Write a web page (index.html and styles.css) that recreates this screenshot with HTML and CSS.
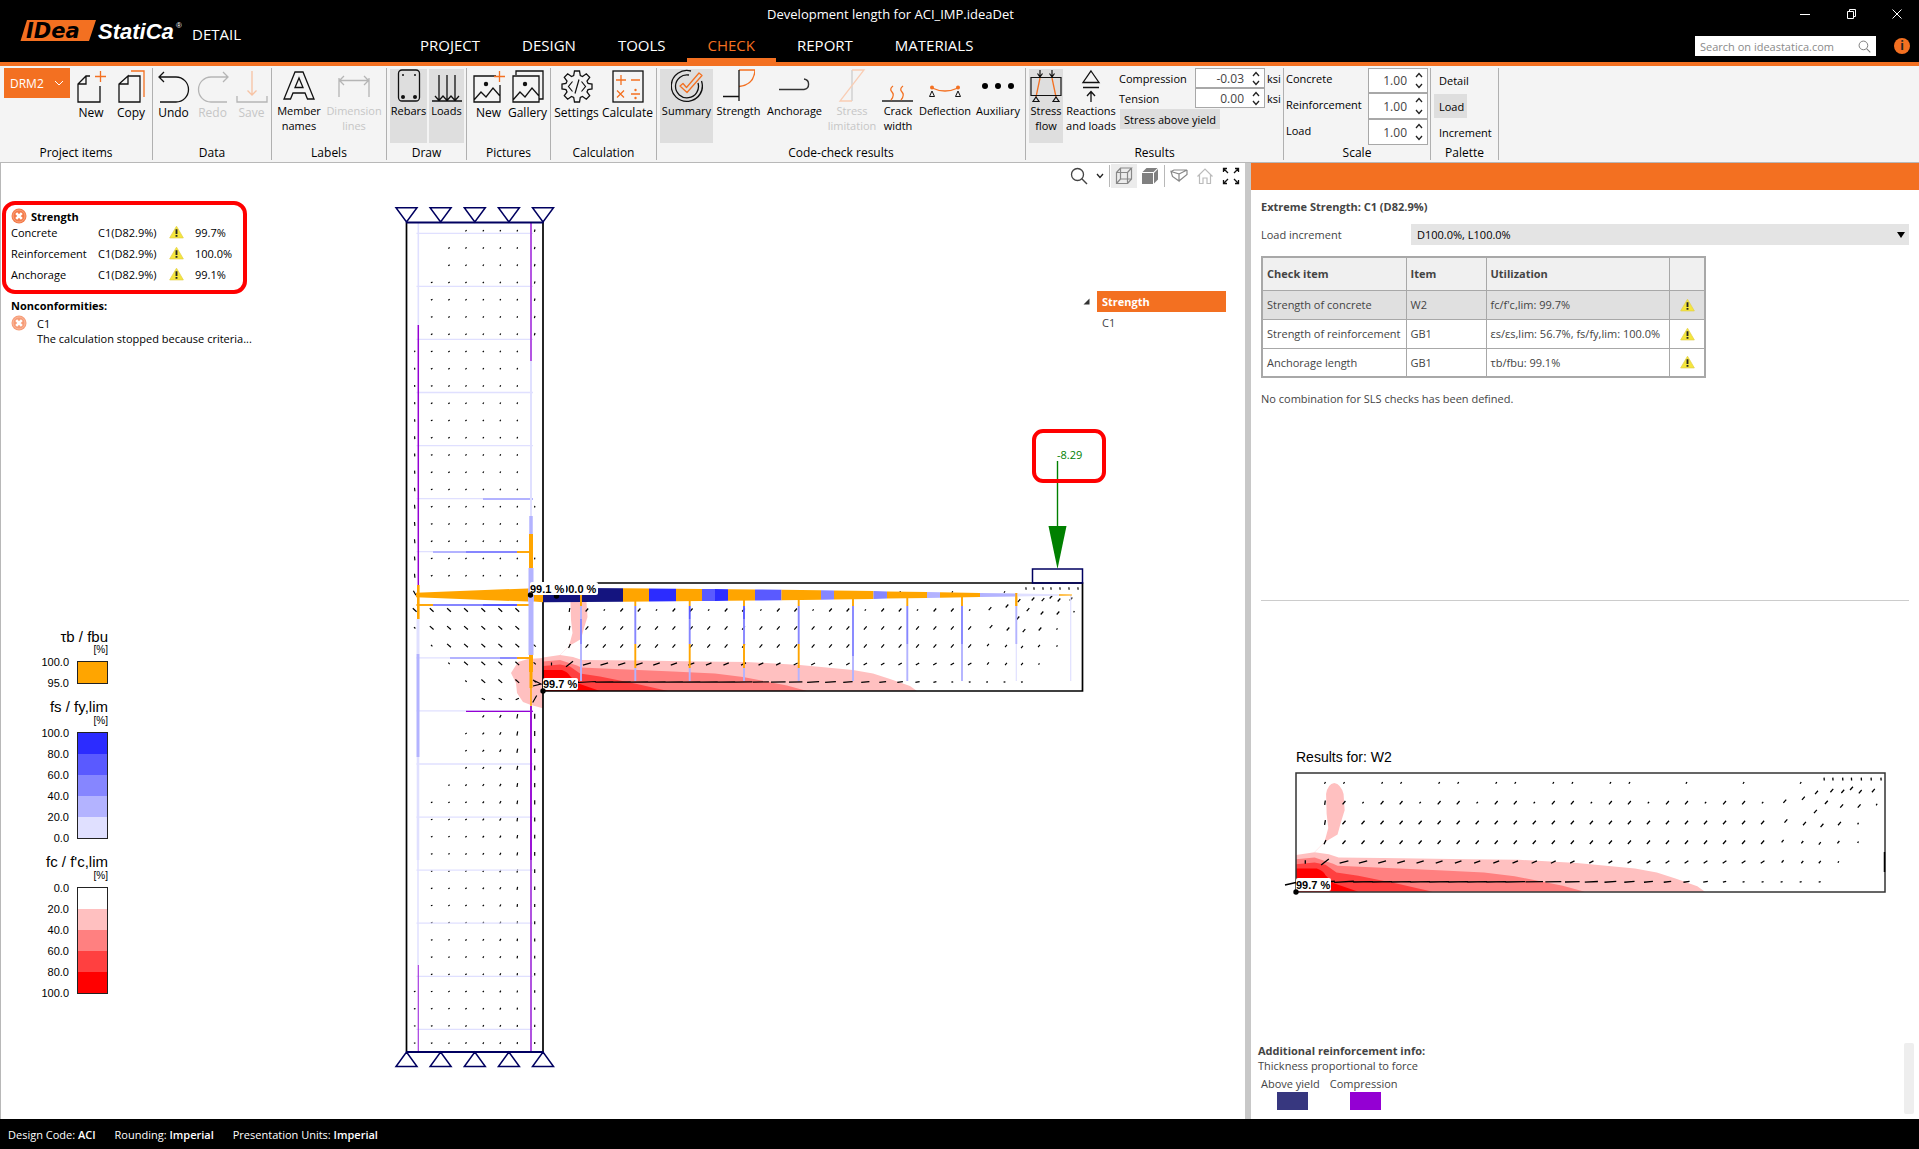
FILE: index.html
```html
<!DOCTYPE html>
<html lang="en">
<head>
  <meta charset="UTF-8">
  <meta name="viewport" content="width=device-width, initial-scale=1.0">
  <title>Development length for ACI_IMP.ideaDet</title>
  <link rel="stylesheet" href="styles.css">
</head>
<body>
  <!-- Shared symbols -->
  <svg class="sprite" aria-hidden="true">
    <symbol id="up" viewBox="0 0 8 6"><path d="M1 5L4 1.5L7 5" fill="none" stroke="#222" stroke-width="1.3"/></symbol>
    <symbol id="down" viewBox="0 0 8 6"><path d="M1 1L4 4.500L7 1" fill="none" stroke="#222" stroke-width="1.3"/></symbol>
    <symbol id="warn" viewBox="0 0 16 14">
      <path d="M8 .8L15.300 13.300H.7Z" fill="#f5e63c" stroke="#e3d04a" stroke-width=".8" stroke-linejoin="round"/>
      <path d="M8 4V9M8 10.300V12" stroke="#222" stroke-width="2"/>
    </symbol>
    <symbol id="error" viewBox="0 0 16 16">
      <circle cx="8" cy="8" r="7.500" fill="#f47b4a"/><circle cx="8" cy="8" r="6" fill="none" stroke="#f9a27c"/>
      <path d="M5.200 5.200L10.800 10.800M10.800 5.200L5.200 10.800" stroke="#fff" stroke-width="2.600"/>
    </symbol>
    <symbol id="picture" viewBox="0 0 32 34">
      <path d="M23 7H1V33H27V16M1 31L8 23L13 28L20 19L27 27" fill="none" stroke="#111" stroke-width="1.3"/>
      <circle cx="13" cy="15" r="2.200" fill="#111"/>
    </symbol>
    <symbol id="lens" viewBox="0 0 18 18">
      <circle cx="7.500" cy="7.500" r="6" fill="none" stroke="currentColor" stroke-width="1.3"/><path d="M11.800 11.800L17 17" stroke="currentColor" stroke-width="1.4"/>
    </symbol>
    <defs>
      <!-- Stress field of the beam, in the coordinates of the model view -->
      <g id="beamStress">
        <path fill="#ffc0c0" d="M543 657.500L560 655L573 657L582 660L640 660.500L700 661.500L747 662L800 665L853 670L873 673.500L890 679L910 686L917 691H543Z"/>
        <path fill="#ffc0c0" d="M569 646L572.500 633L571 620L570.500 602Q572 593 578 592Q584 593 586.500 602L587.500 617L584 628L581 639L576 642Z"/>
        <path d="M569 646L560 655" stroke="#ffe4e4" stroke-width=".7"/>
        <path fill="#ff8080" d="M543 661.500L560 660L577 665.500L581 667.500L673 671.500L715 673.500L743 677L787 685.500L807 691H543Z"/>
        <path fill="#ff4040" d="M543 666L560 664.500L570 666.500L580 673.500L600 676.500L637 684L668 691H543Z"/>
        <path fill="#f00" d="M543 670H562Q568 672 570 676L577 683L600 691H543Z"/>
        <path id="beamTicks" fill="none" stroke="#000" stroke-width="1.2"/>
      </g>
    </defs>
  </svg>

  <header class="titlebar">
    <div class="brand">
      <svg class="logo" viewBox="0 0 162 26" width="162" height="26" role="img" aria-label="IDEA StatiCa">
        <path d="M7 2H76L69 23H.5Z" fill="#f37021"/>
        <text class="logo-idea" x="6" y="20">IDea</text>
        <text class="logo-name" x="78" y="21">StatiCa</text>
        <text class="logo-reg" x="156" y="10">®</text>
      </svg>
      <span class="product">DETAIL</span>
    </div>
    <div class="title">Development length for ACI_IMP.ideaDet</div>
    <div class="window-buttons">
      <button aria-label="Minimize"><svg width="12" height="12"><path d="M1 6.500H11" stroke="#fff"/></svg></button>
      <button aria-label="Restore"><svg width="12" height="12" fill="none" stroke="#fff"><path d="M2.500 3.500H8.500V10.500H2.500ZM4.500 3V1.500H10.500V8.500H9"/></svg></button>
      <button aria-label="Close"><svg width="12" height="12"><path d="M1.500 1.500L10.500 10.500M10.500 1.500L1.500 10.500" stroke="#fff"/></svg></button>
    </div>
    <nav class="tabs">
      <a href="#project">PROJECT</a>
      <a href="#design">DESIGN</a>
      <a href="#tools">TOOLS</a>
      <a href="#check" class="active">CHECK</a>
      <a href="#report">REPORT</a>
      <a href="#materials">MATERIALS</a>
    </nav>
    <div class="search">
      <div class="search-box">
        <input type="text" placeholder="Search on ideastatica.com" aria-label="Search on ideastatica.com">
        <svg width="13" height="13"><use href="#lens"/></svg>
      </div>
      <button class="info" aria-label="Info">i</button>
    </div>
  </header>

  <!-- Ribbon -->
  <div class="ribbon">
    <section class="group g-items">
      <div class="tools">
        <button class="project-pick">DRM2 <svg width="10" height="7"><path d="M1 1L5 5L9 1" fill="none" stroke="#fff"/></svg></button>
        <button class="tool low"><svg viewBox="0 0 32 34"><path d="M15 7H11L3 15V33H25V17M3 15H11V7" fill="none" stroke="#111" stroke-width="1.300"/><path d="M20 7.500H31M25.500 2V13" stroke="#f37021" stroke-width="1.300"/></svg><span>New</span></button>
        <button class="tool low"><svg viewBox="0 0 32 34"><path d="M13 7H25V33H4V15L13 7V15H4" fill="none" stroke="#111" stroke-width="1.300"/><path d="M16 2H29V28" fill="none" stroke="#f37021" stroke-width="1.300"/></svg><span>Copy</span></button>
      </div>
      <h2>Project items</h2>
    </section>
    <section class="group g-data">
      <div class="tools">
        <button class="tool low"><svg viewBox="0 0 32 34"><path d="M6 3L1 8L6 13M1 8H18A12.500 12.500 0 0 1 18 33H2" fill="none" stroke="#111" stroke-width="1.300"/></svg><span>Undo</span></button>
        <button class="tool low" disabled><svg viewBox="0 0 32 34"><path d="M26 3L31 8L26 13M31 8H14A12.500 12.500 0 0 0 14 33H30" fill="none" stroke="#b5b5b5" stroke-width="1.300"/></svg><span>Redo</span></button>
        <button class="tool low" disabled><svg viewBox="0 0 32 34"><path d="M1 27V33H31V27" fill="none" stroke="#b5b5b5" stroke-width="1.300"/><path d="M16 2V26M11.500 21.500L16 26L20.500 21.500" fill="none" stroke="#f7c3a4" stroke-width="1.300"/></svg><span>Save</span></button>
      </div>
      <h2>Data</h2>
    </section>
    <section class="group g-labels">
      <div class="tools">
        <button class="tool"><svg viewBox="0 0 32 34"><path d="M12 3H20L31 30H24.500L22 24H10L7.500 30H1ZM16 9L12 18.500H20Z" fill="none" stroke="#111" stroke-width="1.300"/></svg><span>Member<br>names</span></button>
        <button class="tool" disabled><svg viewBox="0 0 32 34"><path d="M1 9V28M31 9V28M1.500 11.500H30.500M6 7L1.500 11.500L6 16M26 7L30.500 11.500L26 16" fill="none" stroke="#b5b5b5" stroke-width="1.300"/></svg><span>Dimension<br>lines</span></button>
      </div>
      <h2>Labels</h2>
    </section>
    <section class="group g-draw">
      <div class="tools">
        <button class="tool on"><svg viewBox="0 0 32 34"><rect x="5.500" y="1" width="21" height="31" rx="3.500" fill="none" stroke="#111" stroke-width="1.300"/><g fill="#111"><circle cx="10" cy="6" r="1"/><circle cx="22" cy="6" r="1"/><circle cx="10" cy="28" r="2"/><circle cx="22" cy="28" r="2"/></g></svg><span>Rebars</span></button>
        <button class="tool on"><svg viewBox="0 0 32 34"><path d="M1 32H31M8 6V31M16 6V31M24 6V31M4 27L8 31.500L12 27L16 31.500L20 27L24 31.500L28 27" fill="none" stroke="#111" stroke-width="1.300"/></svg><span>Loads</span></button>
      </div>
      <h2>Draw</h2>
    </section>
    <section class="group g-pictures">
      <div class="tools">
        <button class="tool low"><svg viewBox="0 0 32 34"><use href="#picture"/><path d="M21 7.500H32M26.500 2V13" stroke="#f37021" stroke-width="1.300"/></svg><span>New</span></button>
        <button class="tool low"><svg viewBox="0 0 32 34"><use href="#picture"/><path d="M23 7H27V16M4 6V2H31V30H27" fill="none" stroke="#111" stroke-width="1.300"/></svg><span>Gallery</span></button>
      </div>
      <h2>Pictures</h2>
    </section>
    <section class="group g-calc">
      <div class="tools">
        <button class="tool low"><svg viewBox="0 0 32 34"><path d="M12.700 6.500L13.500 2H18.500L19.300 6.500L21.500 7.500L25.300 4.800L28.700 8.300L26 12L27 14.300L31 15V20L27 20.700L26 23L28.700 26.700L25.300 30.200L21.500 27.500L19.300 28.500L18.500 33H13.500L12.700 28.500L10.500 27.500L6.700 30.200L3.300 26.700L6 23L5 20.700L1 20V15L5 14.300L6 12L3.300 8.300L6.700 4.800L10.500 7.500Z" fill="none" stroke="#111" stroke-width="1.300"/><path d="M11.500 12.500L7.500 17.500L11.500 22.500M20.500 12.500L24.500 17.500L20.500 22.500M18 10.500L14 24.500" fill="none" stroke="#111" stroke-width="1.200"/></svg><span>Settings</span></button>
        <button class="tool low"><svg viewBox="0 0 32 34"><rect x="1" y="2" width="30" height="31" fill="none" stroke="#111" stroke-width="1.300"/><path d="M4 11H14M9 6V16M19 11H28M5 21.500L12 28.500M12 21.500L5 28.500M19 25H28" stroke="#f37021" stroke-width="1.300"/><circle cx="23.500" cy="21" r="1.200" fill="#f37021"/><circle cx="23.500" cy="29" r="1.200" fill="#f37021"/></svg><span>Calculate</span></button>
      </div>
      <h2>Calculation</h2>
    </section>
    <section class="group g-check">
      <div class="tools">
        <button class="tool on"><svg viewBox="0 0 32 34"><path d="M20 2A15.500 15.500 0 1 0 30.500 12M18 6A11.500 11.500 0 1 0 27 14M31.500 17A15.500 15.500 0 0 1 25 29.500" fill="none" stroke="#111" stroke-width="1.300"/><path d="M9 17L12 14.500L15.500 18.500L28 4L31 6.500L16 23.500Z" fill="none" stroke="#f37021" stroke-width="1.300" stroke-linejoin="round"/></svg><span>Summary</span></button>
        <button class="tool"><svg viewBox="0 0 32 34"><path d="M16 1H32Q31 16 16 17.500" fill="none" stroke="#f37021" stroke-width="1.300"/><path d="M16 1V32M0 27.500H16" stroke="#111" stroke-width="1.300"/></svg><span>Strength</span></button>
        <button class="tool"><svg viewBox="0 0 32 34"><path d="M0 20.500H25A5.300 5.300 0 0 0 25 10" fill="none" stroke="#333" stroke-width="1.400"/></svg><span>Anchorage</span></button>
        <button class="tool" disabled><svg viewBox="0 0 32 34"><path d="M16 1V32" stroke="#ccc" stroke-width="1.300"/><path d="M16 1H28L4 32H16" fill="none" stroke="#f9cdb4" stroke-width="1.300"/></svg><span>Stress<br>limitation</span></button>
        <button class="tool"><svg viewBox="0 0 32 34"><path d="M0 32H31" stroke="#111" stroke-width="1.400"/><path d="M11 17Q7 20 10 23T9 31M21 17Q17 20 20 23T19 31" fill="none" stroke="#f37021" stroke-width="1.300"/></svg><span>Crack<br>width</span></button>
        <button class="tool"><svg viewBox="0 0 32 34"><path d="M3 19Q16 25 29 19" fill="none" stroke="#f37021" stroke-width="1.300"/><circle cx="3" cy="18.500" r="2" fill="#f37021"/><circle cx="29" cy="18.500" r="2" fill="#f37021"/><path d="M3 22L.5 27.500H5.500ZM29 22L26.500 27.500H31.500Z" fill="none" stroke="#111"/></svg><span>Deflection</span></button>
        <button class="tool"><svg viewBox="0 0 32 34"><circle cx="3" cy="17" r="3"/><circle cx="16" cy="17" r="3"/><circle cx="29" cy="17" r="3"/></svg><span>Auxiliary</span></button>
      </div>
      <h2>Code-check results</h2>
    </section>
    <section class="group g-results">
      <div class="tools">
        <button class="tool on"><svg viewBox="0 0 32 34"><path d="M10 9L6 28M22 9L26 28" stroke="#f37021" stroke-width="1.300"/><path d="M1 8.500H31V26.500H1ZM10 1V8M22 1V8M7.500 4.500L10 8L12.500 4.500M19.500 4.500L22 8L24.500 4.500M6 28L3 32.500H9ZM26 28L23 32.500H29Z" fill="none" stroke="#111" stroke-width="1.200"/></svg><span>Stress<br>flow</span></button>
        <button class="tool"><svg viewBox="0 0 32 34"><path d="M16 2L24 13.500H8ZM8 18.500H24M16 33V23M12 27L16 22.500L20 27" fill="none" stroke="#111" stroke-width="1.300"/></svg><span>Reactions<br>and loads</span></button>
        <div class="spins">
          <label for="comp">Compression</label>
          <span class="spin"><input id="comp" type="text" value="-0.03"><span class="steps"><button aria-label="Increase"><svg><use href="#up"/></svg></button><button aria-label="Decrease"><svg><use href="#down"/></svg></button></span></span>
          <span>ksi</span>
          <label for="tens">Tension</label>
          <span class="spin"><input id="tens" type="text" value="0.00"><span class="steps"><button aria-label="Increase"><svg><use href="#up"/></svg></button><button aria-label="Decrease"><svg><use href="#down"/></svg></button></span></span>
          <span>ksi</span>
          <button class="flat on wide">Stress above yield</button>
        </div>
      </div>
      <h2>Results</h2>
    </section>
    <section class="group g-scale">
      <div class="spins">
        <label for="sc">Concrete</label>
        <span class="spin"><input id="sc" type="text" value="1.00"><span class="steps"><button aria-label="Increase"><svg><use href="#up"/></svg></button><button aria-label="Decrease"><svg><use href="#down"/></svg></button></span></span>
        <label for="sr">Reinforcement</label>
        <span class="spin"><input id="sr" type="text" value="1.00"><span class="steps"><button aria-label="Increase"><svg><use href="#up"/></svg></button><button aria-label="Decrease"><svg><use href="#down"/></svg></button></span></span>
        <label for="sl">Load</label>
        <span class="spin"><input id="sl" type="text" value="1.00"><span class="steps"><button aria-label="Increase"><svg><use href="#up"/></svg></button><button aria-label="Decrease"><svg><use href="#down"/></svg></button></span></span>
      </div>
      <h2>Scale</h2>
    </section>
    <section class="group g-palette">
      <div class="palette">
        <button class="flat">Detail</button>
        <button class="flat on">Load</button>
        <button class="flat">Increment</button>
      </div>
      <h2>Palette</h2>
    </section>
  </div>

  <main class="workspace">
    <!-- Model view -->
    <div class="view">
      <svg class="model" viewBox="1 163 1244 956" preserveAspectRatio="xMinYMin meet" role="img" aria-label="Stress flow in the model">
        <path fill="#ffc0c0" d="M543 658L528 659L518 662L511 673L516 683L517 693L523 702L531 705L542 708H543Z"/>
        <use href="#beamStress"/>
        <path id="columnTicks" fill="none" stroke="#000" stroke-width="1.2"/>
        <g id="bars" fill="none"></g>
        <g fill="none" stroke="#000" stroke-width="1.700">
          <path d="M406.500 222V1052M543 222V1052M543 583H1082.500V691H543"/>
        </g>
        <g id="mainBar"></g>
        <g fill="none" stroke="#000060" stroke-width="1.500">
          <path d="M406 222.500H543.500M406 1052H543.500" stroke-width="2"/>
          <path id="supports"/>
          <path d="M1032.500 569H1082.500V583H1032.500Z"/>
        </g>
        <g class="mark">
          <circle cx="556.500" cy="596" r="2.700"/>
          <rect x="553" y="582" width="45" height="13" rx="2"/><text x="556" y="593">100.0 %</text>
          <rect x="530" y="582" width="36" height="13" rx="2"/><text x="530" y="593">99.1 %</text>
          <circle cx="530.500" cy="595" r="2.700"/>
          <rect x="543" y="678" width="35" height="12" rx="2"/><text x="543" y="688">99.7 %</text>
          <circle cx="543" cy="691" r="2.700"/>
        </g>
        <path d="M1057.500 461V528" stroke="#008000" stroke-width="1.400"/>
        <path d="M1048.500 526H1066.500L1057.500 569Z" fill="#008000"/>
        <text class="load" x="1057" y="459">-8.29</text>
        <rect x="1034" y="431" width="70" height="50" rx="9" fill="none" stroke="#f00" stroke-width="4"/>
      </svg>

      <div class="view-tools">
        <button aria-label="Zoom"><svg width="18" height="18"><use href="#lens"/></svg></button>
        <button class="narrow" aria-label="Zoom options"><svg width="8" height="6"><use href="#down"/></svg></button>
        <i></i>
        <button class="on" aria-label="Wireframe"><svg width="18" height="18" fill="none" stroke="#888" stroke-width="1.200"><path d="M1.500 5.500H12.500V16.500H1.500ZM1.500 5.500L5.500 1H16.500L12.500 5.500M16.500 1V12L12.500 16.500M5.500 1V12H16.500M5.500 12L1.500 16.500"/></svg></button>
        <button aria-label="Solid"><svg width="18" height="18" fill="#808080"><path d="M1 6H12V17H1ZM1.500 5L5.500 1H16.500L12.500 5ZM13 6L17 2V12.500L13 16.500Z"/></svg></button>
        <i></i>
        <button aria-label="Perspective"><svg width="18" height="18" fill="none" stroke="#888" stroke-width="1.200"><path d="M1 4.500L9 7V14L2.500 9.500ZM1 4.500L4 3H17L9 7M17 3V7.500L9 14"/></svg></button>
        <button aria-label="Home"><svg width="18" height="18" fill="none" stroke="#bbb" stroke-width="1.200"><path d="M1.500 9.500L9 2L16.500 9.500M3.500 8V16.500H7V11H11V16.500H14.500V8"/></svg></button>
        <button aria-label="Full screen"><svg width="18" height="18" fill="none" stroke="#111" stroke-width="1.300"><path d="M1.500 5V1.500H5M13 1.500H16.500V5M16.500 13V16.500H13M5 16.500H1.500V13M2 2L6 6M16 2L12 6M16 16L12 12M2 16L6 12"/></svg></button>
      </div>

      <div class="summary">
        <div class="strength">
          <h3><svg width="16" height="16"><use href="#error"/></svg>Strength</h3>
          <dl>
            <dt>Concrete</dt><dd>C1(D82.9%)</dd><dd><svg width="15" height="14"><use href="#warn"/></svg></dd><dd>99.7%</dd>
            <dt>Reinforcement</dt><dd>C1(D82.9%)</dd><dd><svg width="15" height="14"><use href="#warn"/></svg></dd><dd>100.0%</dd>
            <dt>Anchorage</dt><dd>C1(D82.9%)</dd><dd><svg width="15" height="14"><use href="#warn"/></svg></dd><dd>99.1%</dd>
          </dl>
        </div>
        <div class="noncon">
          <h3>Nonconformities:</h3>
          <p class="pale"><svg width="16" height="16"><use href="#error"/></svg>C1</p>
          <p class="reason">The calculation stopped because criteria...</p>
        </div>
      </div>

      <div class="legend">
        <h4>τb / fbu</h4><small>[%]</small>
        <div class="scale">
          <ol><li>100.0</li><li>95.0</li></ol>
          <div class="swatches"><b class="bond"></b></div>
        </div>
        <h4>fs / fy,lim</h4><small>[%]</small>
        <div class="scale">
          <ol><li>100.0</li><li>80.0</li><li>60.0</li><li>40.0</li><li>20.0</li><li>0.0</li></ol>
          <div class="swatches"><b class="s5"></b><b class="s4"></b><b class="s3"></b><b class="s2"></b><b class="s1"></b></div>
        </div>
        <h4>fc / f'c,lim</h4><small>[%]</small>
        <div class="scale">
          <ol><li>0.0</li><li>20.0</li><li>40.0</li><li>60.0</li><li>80.0</li><li>100.0</li></ol>
          <div class="swatches"><b class="c1"></b><b class="c2"></b><b class="c3"></b><b class="c4"></b><b class="c5"></b></div>
        </div>
      </div>

      <ul class="tree">
        <li class="picked"><svg width="7" height="7"><path d="M6.500 .5V6.500H.5Z" fill="#333"/></svg><a href="#strength">Strength</a></li>
        <li><a href="#c1">C1</a></li>
      </ul>
    </div>

    <!-- Results panel -->
    <aside class="panel">
      <div class="panel-head"></div>
      <section class="checks">
        <h3>Extreme Strength: C1 (D82.9%)</h3>
        <div class="increment">
          <label for="inc">Load increment</label>
          <div class="select"><select id="inc"><option>D100.0%, L100.0%</option></select></div>
        </div>
        <table>
          <thead><tr><th>Check item</th><th>Item</th><th>Utilization</th><th></th></tr></thead>
          <tbody>
            <tr class="picked"><td>Strength of concrete</td><td>W2</td><td>fc/f'c,lim: 99.7%</td><td><svg width="15" height="14"><use href="#warn"/></svg></td></tr>
            <tr><td>Strength of reinforcement</td><td>GB1</td><td>εs/εs,lim: 56.7%, fs/fy,lim: 100.0%</td><td><svg width="15" height="14"><use href="#warn"/></svg></td></tr>
            <tr><td>Anchorage length</td><td>GB1</td><td>τb/fbu: 99.1%</td><td><svg width="15" height="14"><use href="#warn"/></svg></td></tr>
          </tbody>
        </table>
        <p>No combination for SLS checks has been defined.</p>
      </section>
      <section class="chart">
        <h4>Results for: W2</h4>
        <svg viewBox="0 0 668 136" role="img" aria-label="Results for W2">
          <use href="#beamStress" transform="translate(45 8) scale(1.0935 1.099) translate(-543 -583)"/>
          <rect x="45" y="8" width="589" height="119" fill="none" stroke="#333" stroke-width="1.500"/>
          <path d="M34 120L45 117.500M633.500 87V107" stroke="#000" stroke-width="1.500"/>
          <g class="mark"><rect x="45" y="113" width="35" height="13" rx="2"/><text x="45" y="124">99.7 %</text><circle cx="45" cy="127" r="2.700"/></g>
        </svg>
      </section>
      <section class="reinf">
        <div>
          <h3>Additional reinforcement info:</h3>
          <p>Thickness proportional to force</p>
          <div class="keys"><span>Above yield<b class="yield"></b></span><span>Compression<b class="comp"></b></span></div>
        </div>
        <div class="scrollbar"></div>
      </section>
    </aside>
  </main>

  <footer class="status">
    <span>Design Code: <b>ACI</b></span>
    <span>Rounding: <b>Imperial</b></span>
    <span>Presentation Units: <b>Imperial</b></span>
  </footer>

  <script src="model.js"></script>
</body>
</html>
```
FILE: styles.css
```css
* {
  box-sizing: border-box;
}
body {
  display: flex;
  flex-direction: column;
  min-height: 100vh;
  margin: 0;
  font-family: "Open Sans", sans-serif;
  font-size: 12px;
  line-height: 15px;
  color: #000;
  background: #fff;
}
h2, h3, h4, p, dl, dd, ul, ol {
  margin: 0;
  padding: 0;
  font-size: inherit;
}
ul, ol {
  list-style: none;
}
a {
  color: inherit;
  text-decoration: none;
}
button, input, select {
  margin: 0;
  padding: 0;
  border: 0;
  background: none;
  font: inherit;
  color: inherit;
}
.sprite {
  position: absolute;
  width: 0;
  height: 0;
}

/* Title bar */
.titlebar {
  display: grid;
  grid-template-columns: 399px 1fr 240px;
  grid-template-rows: 28px 34px;
  background: #000;
  color: #fff;
  border-bottom: 4px solid #f37021;
  box-sizing: content-box;
}
.brand {
  grid-row: 1 / 3;
  display: flex;
  align-items: center;
  gap: 10px;
  padding: 6px 0 0 20px;
}
.logo {
  margin-bottom: 6px;
}
.logo-idea {
  font: italic bold 21px "DejaVu Sans", sans-serif;
  fill: #000;
}
.logo-name {
  font: italic bold 22px "Liberation Sans", sans-serif;
  fill: #fff;
}
.logo-reg {
  font: 8px "Liberation Sans", sans-serif;
  fill: #fff;
}
.product {
  font-size: 15px;
}
.title {
  align-self: center;
  padding-right: 297px;
  text-align: center;
  font-size: 13px;
}
.window-buttons {
  display: flex;
  justify-content: flex-end;
  align-items: center;
  gap: 34px;
  padding-right: 16px;
}
.window-buttons button {
  display: flex;
}
.tabs {
  display: flex;
  font-size: 15px;
}
.tabs a {
  padding: 10px 21px 5px;
  border-bottom: 4px solid transparent;
}
.tabs .active {
  color: #f37021;
  border-color: #f37021;
}
.search {
  display: flex;
  justify-content: flex-end;
  align-items: center;
  gap: 18px;
  padding: 2px 9px 0 0;
}
.search-box {
  display: flex;
  align-items: center;
  width: 181px;
  height: 20px;
  padding: 0 5px;
  background: #fff;
  color: #777;
  font-size: 11px;
}
.search-box input {
  flex: 1;
  min-width: 0;
}
.search-box input::placeholder {
  color: #8a8a8a;
}
.info {
  width: 16px;
  height: 16px;
  border-radius: 50%;
  background: #f37021;
  color: #222;
  font-weight: bold;
  line-height: 16px;
}

/* Ribbon */
.ribbon {
  display: flex;
  height: 97px;
  padding: 2px 0;
  background: #f4f4f4;
  border-bottom: 1px solid #b8b8b8;
}
.group {
  display: flex;
  flex-direction: column;
  justify-content: space-between;
  border-right: 1px solid #b0b0b0;
}
.group h2 {
  font-weight: normal;
  text-align: center;
}
.tools {
  display: grid;
}
.g-items { width: 153px; }
.g-items .tools { grid-template-columns: 66px 38px 38px; column-gap: 2px; padding-left: 4px; }
.g-data { width: 119px; }
.g-data .tools { grid-template-columns: 39px 39px 39px; padding-left: 1px; }
.g-labels { width: 115px; }
.g-labels .tools { grid-template-columns: 54px 56px; }
.g-draw { width: 80px; }
.g-draw .tools { grid-template-columns: 37px 35px; column-gap: 2px; padding-left: 3px; }
.g-pictures { width: 84px; }
.g-pictures .tools { grid-template-columns: 39px 39px; padding-left: 2px; }
.g-calc { width: 106px; }
.g-calc .tools { grid-template-columns: 51px 51px; }
.g-check { width: 369px; }
.g-check .tools { grid-template-columns: 53px 51px 61px 54px 38px 56px 50px; padding-left: 3px; }
.g-results { width: 258px; }
.g-results .tools { grid-template-columns: 34px 52px 1fr; column-gap: 2px; padding-left: 3px; }
.g-scale { width: 147px; }
.g-palette { width: 68px; }

.project-pick {
  display: flex;
  align-items: center;
  justify-content: space-between;
  height: 30px;
  padding: 0 6px;
  background: #f37021;
  color: #fff;
}
.tool {
  display: flex;
  flex-direction: column;
  align-items: center;
  height: 74px;
  margin-top: 1px;
}
.tool svg {
  flex: none;
  width: 32px;
  height: 34px;
}
.tool span {
  font-size: 11px;
  white-space: nowrap;
}
.tool.low span {
  margin-top: 2px;
  font-size: 12px;
}
.tool:disabled span {
  color: #c6c6c6;
}
.on {
  background: #dedede;
}
.spins {
  display: grid;
  align-items: center;
}
.g-results .spins {
  grid-template-columns: 76px 70px 17px;
  grid-template-rows: 20px 20px 22px;
  align-content: start;
}
.g-results .spins > span:nth-child(3n) {
  padding-left: 2px;
  font-size: 11px;
}
.g-scale .spins {
  grid-template-columns: 82px 60px;
  grid-template-rows: 25px 26px 26px;
  padding-left: 2px;
}
.g-scale .spins label {
  padding-bottom: 4px;
}
.spins label,
.flat {
  font-size: 11px;
}
.spin {
  display: flex;
  height: 100%;
  background: #fff;
  border: 1px solid #a8a8a8;
}
.spin input {
  flex: 1;
  min-width: 0;
  padding-right: 8px;
  text-align: right;
  color: #444;
}
.steps {
  display: flex;
  flex-direction: column;
  justify-content: space-around;
  width: 12px;
}
.steps button {
  display: flex;
}
.steps svg {
  width: 8px;
  height: 6px;
}
.flat {
  height: 24px;
  padding: 0 3px 0 5px;
  white-space: nowrap;
}
.flat.wide {
  grid-column: 1 / 3;
  justify-self: start;
  height: 20px;
  margin-left: 1px;
  padding: 0;
  width: 100px;
}
.palette {
  display: flex;
  flex-direction: column;
  align-items: flex-start;
  gap: 2px;
  padding-left: 3px;
}

/* Workspace */
.workspace {
  flex: 1;
  display: grid;
  grid-template-columns: 1fr 674px;
  font-size: 11px;
}
.view {
  position: relative;
  overflow: hidden;
  border-left: 1px solid #b8b8b8;
}
.model {
  position: absolute;
  inset: 0;
  width: 100%;
  height: 100%;
}
.mark {
  font: bold 11px "Liberation Sans", sans-serif;
}
.mark rect {
  fill: #fff;
}
.load {
  fill: #008000;
}
.view-tools {
  position: absolute;
  top: 0;
  right: 1px;
  display: flex;
  align-items: center;
  height: 26px;
  color: #444;
}
.view-tools button {
  display: flex;
  align-items: center;
  justify-content: center;
  width: 26px;
  height: 24px;
}
.view-tools .narrow {
  width: 16px;
}
.view-tools .on {
  background: #ececec;
}
.view-tools i {
  width: 1px;
  height: 22px;
  margin: 0 1px;
  background: #b8b8b8;
}
.summary {
  position: absolute;
  top: 38px;
  left: 1px;
  width: 262px;
}
.summary h3 {
  display: flex;
  align-items: center;
  gap: 4px;
}
.strength {
  width: 245px;
  height: 93px;
  padding: 3px 5px;
  border: 4px solid #f00;
  border-radius: 13px;
}
.strength dl {
  display: grid;
  grid-template-columns: 87px 71px 26px 1fr;
  row-gap: 6px;
  padding-top: 1px;
}
.strength dd svg {
  display: block;
}
.noncon {
  padding: 4px 0 0 9px;
}
.noncon p {
  display: flex;
  align-items: center;
  gap: 10px;
}
.noncon .pale {
  margin-top: 2px;
}
.pale svg {
  opacity: .75;
}
.noncon .reason {
  padding-left: 26px;
  white-space: nowrap;
}

/* Colour scales */
.legend {
  position: absolute;
  top: 465px;
  left: 29px;
  width: 78px;
  font-family: "Liberation Sans", sans-serif;
  text-align: right;
}
.legend h4 {
  font-size: 15px;
  font-weight: normal;
  line-height: 17px;
  white-space: nowrap;
}
.legend .scale + h4 {
  line-height: 18px;
}
.legend small {
  display: block;
  font-size: 10px;
  line-height: 10px;
}
.scale {
  display: flex;
  justify-content: flex-end;
  align-items: center;
  gap: 8px;
  margin-bottom: 8px;
}
.scale ol {
  display: flex;
  flex-direction: column;
  gap: 7px;
}
.scale li {
  line-height: 14px;
}
.swatches {
  display: flex;
  flex-direction: column;
  width: 31px;
  border: 1px solid #222;
}
.swatches b {
  height: 21px;
}
.bond { background: #ffa500; }
.s1 { background: #e0e0ff; }
.s2 { background: #b3b3ff; }
.s3 { background: #8686ff; }
.s4 { background: #5a5aff; }
.s5 { background: #2c2cff; }
.c1 { background: #fff; }
.c2 { background: #ffc0c0; }
.c3 { background: #ff8080; }
.c4 { background: #ff4040; }
.c5 { background: #f00; }

.tree {
  position: absolute;
  top: 128px;
  right: 19px;
  width: 143px;
}
.tree li {
  display: flex;
  align-items: center;
  gap: 7px;
  height: 21px;
  color: #444;
}
.tree a {
  flex: 1;
  padding: 3px 5px;
  margin-left: 14px;
}
.tree .picked a {
  margin: 0;
  background: #f37021;
  color: #fff;
  font-weight: bold;
}

/* Results panel */
.panel {
  display: flex;
  flex-direction: column;
  border-left: 6px solid #c8c8c8;
  color: #444;
}
.panel-head {
  height: 27px;
  background: #f37021;
}
.checks {
  flex: 399 0 0;
  margin: 0 10px;
  padding-top: 9px;
  border-bottom: 1px solid #ccc;
}
.increment {
  display: flex;
  align-items: center;
  margin: 10px 0 11px;
}
.increment label {
  width: 150px;
}
.select {
  position: relative;
  flex: 1;
}
.select::after {
  content: "";
  position: absolute;
  right: 4px;
  top: 8px;
  border: 4px solid transparent;
  border-top: 6px solid #000;
  border-bottom: 0;
}
.select select {
  width: 100%;
  height: 21px;
  padding: 0 6px;
  appearance: none;
  background: #e4e4e4;
  color: #000;
}
table {
  border-collapse: collapse;
  border: 2px solid #a8a8a8;
}
th, td {
  height: 29px;
  padding: 0 4px;
  border: 1px solid #a8a8a8;
  text-align: left;
  white-space: nowrap;
}
th {
  height: 33px;
  background: #f0f0f0;
}
td:last-child {
  width: 36px;
  padding-left: 10px;
}
td:nth-child(1) { width: 144px; }
td:nth-child(2) { width: 80px; }
td:nth-child(3) { width: 183px; }
td svg {
  display: block;
}
tr.picked {
  background: #e0e0e0;
}
.checks p {
  margin-top: 13px;
}
.chart {
  flex: 433 0 0;
  display: flex;
  flex-direction: column;
  justify-content: center;
  padding-top: 7px;
}
.chart h4 {
  padding-left: 45px;
  font: 14px "Liberation Sans", sans-serif;
  color: #000;
}
.chart svg {
  display: block;
  width: 100%;
  color: #000;
}
.reinf {
  display: flex;
  justify-content: space-between;
  padding: 0 5px 5px 7px;
}
.keys {
  display: flex;
  gap: 10px;
  padding: 3px 3px 0;
}
.keys b {
  display: block;
  width: 31px;
  height: 18px;
  margin: 1px 0 4px 16px;
}
.keys .comp {
  margin-left: 20px;
  background: #9400d3;
}
.yield {
  background: #37377f;
}
.scrollbar {
  width: 10px;
  border-radius: 2px;
  background: #eee;
}

/* Status bar */
.status {
  display: flex;
  align-items: center;
  gap: 19px;
  height: 30px;
  padding: 1px 8px 0;
  background: #000;
  color: #fff;
  font-size: 11px;
}
.status b {
  font-weight: 600;
}
```
FILE: model.js
```js
const ORANGE = '#ffa500';
const PURPLE = '#9400d3';
const B1 = '#e0e0ff', B2 = '#b3b3ff', B3 = '#8686ff', B4 = '#5a5aff', B5 = '#2c2cff';

// One stress direction mark, centred on x, y
function tick(x, y, len, deg) {
  const dx = Math.cos(deg * Math.PI / 180) * len / 2;
  const dy = Math.sin(deg * Math.PI / 180) * len / 2;
  return `M${(x - dx).toFixed(1)} ${(y + dy).toFixed(1)}L${(x + dx).toFixed(1)} ${(y - dy).toFixed(1)}`;
}

function line(x1, y1, x2, y2, color, width) {
  return `<path d="M${x1} ${y1}L${x2} ${y2}" stroke="${color}" stroke-width="${width}"/>`;
}

// Beam marks
let beam = '';
const bx = k => 569.5 + 17.4 * k;
[0, 1, 3, 4, 6, 7, 9, 10, 12, 13, 15, 16, 19, 22, 25].forEach(k => beam += tick(bx(k), 592, 1.8, 60));
for (let k = 0; k < 24; k++) {
  const a = k === 0 ? 80 : 48;
  beam += tick(bx(k), 610, k % 3 === 2 ? 1.8 : 4, a);
  beam += tick(bx(k), 628, 4.2, a);
  beam += tick(bx(k), 646, 4.2, k === 0 ? 65 : 48);
  beam += k === 0 ? tick(569.5, 664, 9, 38) : tick(bx(k), 664, Math.max(4, 8.5 - k * 0.3), Math.min(32, 14 + k));
}
for (let k = 0; k < 27; k++) {
  beam += tick(bx(k), 682, k < 11 ? 18 : Math.max(1.8, 16 - (k - 11) * 1.3), k < 2 ? 3 : 1 + Math.max(0, k - 12));
}
beam += tick(551.5, 664, 3, 90);
[[990, 608.7], [1007, 606], [1019, 600.7], [1033, 599], [1043, 599.7], [1051, 597], [1059, 600], [1071, 599],
 [1028, 609.7], [1042, 613], [1058, 613], [1018, 618], [991, 626.7], [1008, 629], [1024, 630.7], [1040, 629]]
  .forEach(p => beam += tick(p[0], p[1], 4, 48));
[[988, 645], [1006, 646], [1022, 647], [1039, 646], [988, 663.5], [1006, 664], [1022, 664]].forEach(p => beam += tick(p[0], p[1], 2.8, 50));
[[1074, 611.7], [1057, 629], [1057, 646], [1039, 664]].forEach(p => beam += tick(p[0], p[1], 1.6, 60));
[1026, 1034, 1043, 1051, 1060, 1069, 1078].forEach(x => beam += tick(x, 588.5, 2.6, 95));
document.getElementById('beamTicks').setAttribute('d', beam);

// Column marks
const cx = [414.7, 431.7, 449, 466, 483.3, 500.3, 517.3, 534.7];
let col = '';
for (let r = 0; r < 21; r++) {
  const y = 230.7 + 17.25 * r;
  const first = r === 0 ? 3 : r < 3 ? 2 : r < 7 ? 1 : 0;
  for (let c = first; c < 8; c++) {
    if (c === 7 && r > 6 && r !== 16 && r !== 19) continue;
    if (c === 0) col += tick(cx[0], y, Math.min(4, 1.5 + (r - 7) * 0.25), 95);
    else col += tick(cx[c], y, c === 7 && r < 7 ? 2.4 : 1.7, 20 + c * 8);
  }
}
for (let r = 0; r < 26; r++) {
  const y = r < 6 ? 610 + 17.8 * r : 716.3 + 17.2 * (r - 6);
  const first = [0, 0, 1, 2, 3, 4, 4, 3, 3, 3, 2][r] ?? (r < 22 ? 1 : 0);
  for (let c = first; c < 8; c++) {
    if (c === 7 && r < 2) continue;
    if (r < 5) col += tick(cx[c], y, c === first && r > 0 ? 2 : c === 7 ? 3 : 5.2, -42);
    else if (r === 5) col += tick(cx[c], y, c === 7 ? 8 : 3.5, c === 7 ? 60 : c === 6 ? 25 : -25);
    else if (c === 7) col += tick(cx[c], y, Math.max(1.8, 5 - (r - 6) * 0.16), 90);
    else if (c === 6) col += tick(cx[c], y, Math.max(1.8, 4.5 - (r - 6) * 0.15), 80);
    else col += tick(cx[c], y, Math.max(1.7, c / 2 + 0.5 - (r - 6) * 0.06), 10 + c * 10);
  }
}
col += tick(414.7, 593, 5, -60) + 'M533 680L541 684L533 686';
document.getElementById('columnTicks').setAttribute('d', col);

// Reinforcement
let bars = '';
for (let i = 0; i < 16; i++) {
  bars += line(416.5, 233.3 + 53.07 * i, 533, 233.3 + 53.07 * i, B1, 1.3);
}
[[483, 533, 499, B2], [433, 466, 552, B2], [466, 517, 552, B3], [517, 533, 552, ORANGE],
 [416.5, 433, 605, ORANGE], [433, 483, 605, B3], [483, 517, 605, B4], [517, 533, 605, ORANGE],
 [450, 500, 658, B2], [500, 517, 658, B3], [517, 533, 658, ORANGE], [466, 533, 711.3, PURPLE]]
  .forEach(s => bars += line(s[0], s[2], s[1], s[2], s[3], s[3] === PURPLE ? 1.2 : 1.9));

[[418.3, 223, 325, B1, 1.6], [418.3, 325, 585, PURPLE, 1.5],
 [418, 619, 654, B1, 3], [418, 654, 757, B2, 3], [418, 757, 860, B1, 2.6], [418, 860, 965, B1, 1.5],
 [418.3, 585, 619, ORANGE, 2.6], [418.3, 965, 1051, '#a63ae0', 1.2],
 [531, 223, 361, '#b455e2', 2], [531, 361, 516, B1, 2], [531, 516, 534, B2, 3.5], [531, 534, 568, ORANGE, 4],
 [531, 568, 655, B2, 5], [531, 655, 672, ORANGE, 4], [531, 672, 688, ORANGE, 3], [531, 688, 706, ORANGE, 1.5],
 [531, 706, 860, '#9c14d6', 2], [531, 860, 1051, '#a840dc', 1.8]]
  .forEach(s => bars += line(s[0], s[1], s[0], s[2], s[3], s[4]));

const legs = [
  [581, 595, [606, ORANGE], [619, B2], [644, B3], [681, B2]],
  [635.3, 600, [606, ORANGE], [644, B3], [668, ORANGE], [681, B2]],
  [689.7, 600, [606, ORANGE], [619, B4], [644, B3], [668, ORANGE], [681, B2]],
  [744, 600, [606, ORANGE], [619, B4], [644, B3], [668, ORANGE], [681, B2]],
  [798.7, 599, [606, ORANGE], [644, B3], [668, ORANGE], [681, B2]],
  [853, 598, [606, ORANGE], [656, B3], [681, B2]],
  [907.3, 597, [606, ORANGE], [644, B3], [681, B2]],
  [962, 596, [606, ORANGE], [644, B3], [681, B2]],
  [1016.3, 593, [606, ORANGE], [644, B2], [681, B1]],
  [1070.7, 595, [681, B1]]
];
legs.forEach(([x, y, ...parts]) => parts.forEach(([end, color]) => {
  bars += line(x, y, x, end, color, color === B1 ? 1.2 : 1.9);
  y = end;
}));
document.getElementById('bars').innerHTML = bars;

// Top bar: x start, half height there, colour up to the next entry
const main = [
  [416, 2.2, ORANGE], [528, 6.6, B2], [534, 6.6, ORANGE], [543, 7.2, '#14147f'], [623, 6.7, ORANGE], [649, 6.5, B5],
  [676, 6.3, ORANGE], [702, 6.1, B4], [715, 6, B5], [728, 5.8, ORANGE], [755, 5.5, B4], [781.5, 5.2, ORANGE],
  [821, 4.7, B3], [834, 4.5, ORANGE], [873.5, 3.9, B3], [887, 3.6, ORANGE], [927, 3.1, B2], [940, 2.8, ORANGE],
  [980, 2, B2], [1017, 1.5, B1], [1059, 0.7, ORANGE], [1072, 0.6, null]
];
let topBar = '';
for (let i = 0; i < main.length - 1; i++) {
  const [x1, h1, color] = main[i];
  const [x2, h2] = main[i + 1];
  topBar += `<path d="M${x1} ${595 - h1}L${x2} ${595 - h2}V${595 + h2}L${x1} ${595 + h1}Z" fill="${color}"/>`;
}
topBar += line(581, 595, 581, 606, ORANGE, 1.9) + line(1016.3, 593, 1016.3, 606, ORANGE, 1.9);
document.getElementById('mainBar').innerHTML = topBar;

// Supports at both ends of the column
let sup = '';
[406.5, 440.6, 474.8, 508.9, 543].forEach(x => {
  sup += `M${x - 10.5} 207.700H${x + 10.5}L${x} 222ZM${x - 10.5} 1066.500H${x + 10.5}L${x} 1052Z`;
});
document.getElementById('supports').setAttribute('d', sup);
```
